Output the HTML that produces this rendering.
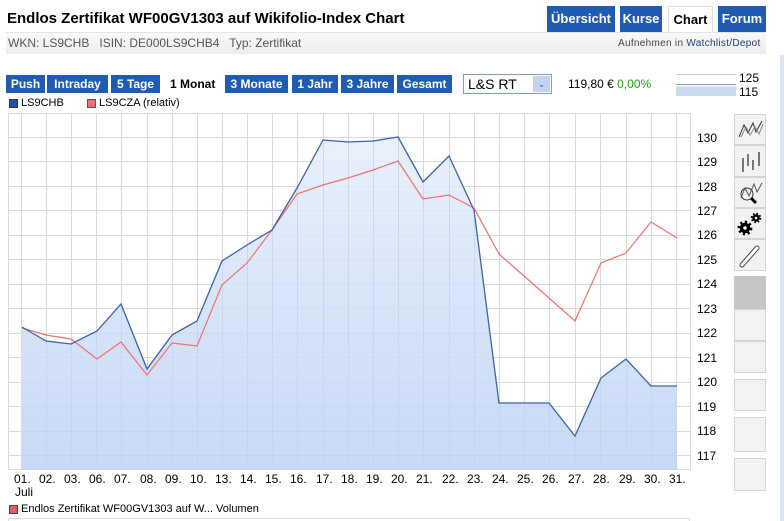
<!DOCTYPE html>
<html><head><meta charset="utf-8"><style>
*{margin:0;padding:0;box-sizing:border-box}
body{width:784px;height:521px;overflow:hidden;background:#fff;font-family:"Liberation Sans",sans-serif;position:relative;font-size:12px;color:#000}
.a{position:absolute}
.tab{position:absolute;top:6px;height:26px;background:#1f5bb0;color:#fff;font-weight:bold;font-size:13px;line-height:26px;text-align:center}
.btn{position:absolute;top:75px;height:18px;background:#1f5bb0;color:#fff;font-weight:bold;font-size:12px;line-height:18px;text-align:center}
.ib{position:absolute;left:734px;width:32px;background:#f2f2f2;border:1px solid #d4d4d4}
.yl{position:absolute;left:697px;font-size:12px}
.xl{position:absolute;top:472px;font-size:12px}
</style></head><body>
<div class="a" style="left:7px;top:10px;font-size:15px;font-weight:bold">Endlos Zertifikat WF00GV1303 auf Wikifolio-Index Chart</div>
<div class="tab" style="left:547px;width:68px">Übersicht</div>
<div class="tab" style="left:620px;width:42px">Kurse</div>
<div class="tab" style="left:668px;width:45px;background:#fff;color:#000;border:1px solid #ddd;border-bottom:none">Chart</div>
<div class="tab" style="left:718px;width:48px">Forum</div>
<div class="a" style="left:6px;top:32px;width:760px;height:22px;background:linear-gradient(#fafafa,#ececec);border-top:1px solid #e4e4e4"></div>
<div class="a" style="left:8px;top:36px;font-size:12px;color:#555">WKN: LS9CHB &nbsp; ISIN: DE000LS9CHB4 &nbsp; Typ: Zertifikat</div>
<div class="a" style="left:618px;top:38px;font-size:10px;color:#444;letter-spacing:0.3px">Aufnehmen in <span style="color:#1a3f80">Watchlist/Depot</span></div>
<div class="btn" style="left:6px;width:39px">Push</div>
<div class="btn" style="left:47px;width:61px">Intraday</div>
<div class="btn" style="left:111px;width:49px">5 Tage</div>
<div class="a" style="left:170px;top:77px;font-weight:bold;font-size:12px">1 Monat</div>
<div class="btn" style="left:225px;width:63px">3 Monate</div>
<div class="btn" style="left:292px;width:46px">1 Jahr</div>
<div class="btn" style="left:341px;width:53px">3 Jahre</div>
<div class="btn" style="left:397px;width:55px">Gesamt</div>
<div class="a" style="left:463px;top:74px;width:89px;height:20px;border:1px solid #7f9db9;font-size:14px;line-height:18px;padding-left:4px">L&amp;S RT</div>
<div class="a" style="left:533px;top:76px;width:17px;height:16px;background:#c4d4f0;color:#4d6185;font-size:9px;text-align:center;line-height:16px">&#8964;</div>
<div class="a" style="left:568px;top:77px;font-size:12px">119,80 € <span style="color:#1fa01f">0,00%</span></div>
<div class="a" style="left:676px;top:74px;width:60px;height:22px;border-top:1px solid #ccc;background:linear-gradient(#fff 55%,#cbd9f1 55%)"></div>
<div class="a" style="left:676px;top:84px;width:60px;height:1px;background:#8a9ab5"></div>
<div class="a" style="left:739px;top:71px;font-size:12px;line-height:14px">125<br>115</div>
<div class="a" style="left:780px;top:55px;width:4px;height:466px;background:#dde6f3"></div>
<div class="a" style="left:9px;top:99px;width:9px;height:9px;background:#1f4fae;border:1px solid #333"></div>
<div class="a" style="left:21px;top:97px;font-size:11px">LS9CHB</div>
<div class="a" style="left:87px;top:99px;width:9px;height:9px;background:#f27070;border:1px solid #555"></div>
<div class="a" style="left:99px;top:97px;font-size:11px">LS9CZA (relativ)</div>
<svg class="a" style="left:0;top:0" width="700" height="480">
<defs><linearGradient id="g" x1="0" y1="0" x2="0" y2="1"><stop offset="0" stop-color="#e6eefb"/><stop offset="1" stop-color="#bcd2f4"/></linearGradient></defs>
<g stroke="#dadada" stroke-width="1">
<path d="M8.5 113V470M690.5 113V470M8 113.5H690M8 469.5H690"/>
<path d="M21.5 113V470M46.5 113V470M71.5 113V470M96.5 113V470M121.5 113V470M147.5 113V470M172.5 113V470M197.5 113V470M222.5 113V470M247.5 113V470M272.5 113V470M297.5 113V470M323.5 113V470M348.5 113V470M373.5 113V470M398.5 113V470M423.5 113V470M449.5 113V470M474.5 113V470M499.5 113V470M524.5 113V470M549.5 113V470M575.5 113V470M600.5 113V470M626.5 113V470M651.5 113V470M676.5 113V470"/>
<path d="M8 137.5H690M8 161.5H690M8 186.5H690M8 210.5H690M8 235.5H690M8 259.5H690M8 284.5H690M8 308.5H690M8 333.5H690M8 357.5H690M8 382.5H690M8 406.5H690M8 431.5H690M8 455.5H690"/>
</g>
<path fill="url(#g)" fill-opacity="0.85" d="M22 327L46 341L71 344L97 331L121 304L147 369L172 335L197 321L222 261L247 245L272 230L297 188L323 140L348 142L373 141L398 137L423 182L449 156L474 210L499 403L524 403L549 403L575 436L601 378L626 359L651 386L677 386V470H22Z"/>
<g stroke="#c3d4ee" stroke-width="1" opacity="0.7"><path d="M46.5 341V470M71.5 344V470M96.5 331V470M121.5 304V470M147.5 369V470M172.5 335V470M197.5 321V470M222.5 261V470M247.5 245V470M272.5 230V470M297.5 188V470M323.5 140V470M348.5 142V470M373.5 141V470M398.5 137V470M423.5 182V470M449.5 156V470M474.5 210V470M499.5 403V470M524.5 403V470M549.5 403V470M575.5 436V470M600.5 378V470M626.5 359V470M651.5 386V470"/></g>
<polyline fill="none" stroke="#f07070" stroke-width="1.2" points="22,328 46,335 71,339 97,359 121,342 147,375 172,343 197,346 222,285 247,263 272,230 297,194 323,185 348,178 373,170 398,161 423,199 449,195 474,208 499,254 524,276 549,298 575,321 601,263 626,253 651,222 677,238"/>
<polyline fill="none" stroke="#3a63a8" stroke-width="1.3" points="22,327 46,341 71,344 97,331 121,304 147,369 172,335 197,321 222,261 247,245 272,230 297,188 323,140 348,142 373,141 398,137 423,182 449,156 474,210 499,403 524,403 549,403 575,436 601,378 626,359 651,386 677,386"/>
</svg>
<div class="yl" style="top:131px">130</div><div class="yl" style="top:155px">129</div><div class="yl" style="top:180px">128</div><div class="yl" style="top:204px">127</div><div class="yl" style="top:228px">126</div><div class="yl" style="top:253px">125</div><div class="yl" style="top:277px">124</div><div class="yl" style="top:302px">123</div><div class="yl" style="top:326px">122</div><div class="yl" style="top:351px">121</div><div class="yl" style="top:375px">120</div><div class="yl" style="top:400px">119</div><div class="yl" style="top:424px">118</div><div class="yl" style="top:449px">117</div>
<div class="xl" style="left:14px">01.</div><div class="xl" style="left:39px">02.</div><div class="xl" style="left:64px">03.</div><div class="xl" style="left:89px">06.</div><div class="xl" style="left:114px">07.</div><div class="xl" style="left:140px">08.</div><div class="xl" style="left:165px">09.</div><div class="xl" style="left:190px">10.</div><div class="xl" style="left:215px">13.</div><div class="xl" style="left:240px">14.</div><div class="xl" style="left:265px">15.</div><div class="xl" style="left:290px">16.</div><div class="xl" style="left:316px">17.</div><div class="xl" style="left:341px">18.</div><div class="xl" style="left:366px">19.</div><div class="xl" style="left:391px">20.</div><div class="xl" style="left:416px">21.</div><div class="xl" style="left:442px">22.</div><div class="xl" style="left:467px">23.</div><div class="xl" style="left:492px">24.</div><div class="xl" style="left:517px">25.</div><div class="xl" style="left:542px">26.</div><div class="xl" style="left:568px">27.</div><div class="xl" style="left:593px">28.</div><div class="xl" style="left:619px">29.</div><div class="xl" style="left:644px">30.</div><div class="xl" style="left:669px">31.</div>
<div class="a" style="left:15px;top:485px;font-size:12px">Juli</div>
<div class="a" style="left:9px;top:505px;width:9px;height:9px;background:#e06060;border:1px solid #444"></div>
<div class="a" style="left:21px;top:503px;font-size:11px">Endlos Zertifikat WF00GV1303 auf W... Volumen</div>
<div class="a" style="left:8px;top:518px;width:682px;height:3px;border:1px solid #ddd;border-bottom:none"></div>
<div class="ib" style="top:114px;height:31px"><svg width="30" height="29"><polyline points="4,22 9,10 13,18 18,8 21,17 27,6" fill="none" stroke="#333" stroke-width="1"/><polyline points="6,22 11,12 15,20 20,12 24,19 28,9" fill="none" stroke="#888" stroke-width="1"/></svg></div>
<div class="ib" style="top:145px;height:32px"><svg width="30" height="30"><path d="M8 12V26M13 8V20M18 14V24M24 6V20" stroke="#777" stroke-width="2"/></svg></div>
<div class="ib" style="top:177px;height:31px"><svg width="30" height="29"><circle cx="12" cy="16" r="6" fill="none" stroke="#333"/><path d="M16 20L21 25" stroke="#000" stroke-width="3"/><polyline points="6,20 10,10 14,18 19,6 22,14 27,5" fill="none" stroke="#555"/></svg></div>
<div class="ib" style="top:208px;height:31px"><svg width="30" height="29"><circle cx="10" cy="19" r="3.5" fill="#fff" stroke="#000" stroke-width="3.5"/><circle cx="10" cy="19" r="6.2" fill="none" stroke="#000" stroke-width="2.4" stroke-dasharray="2.2 2.6"/><circle cx="21" cy="9" r="2.5" fill="#fff" stroke="#000" stroke-width="2.5"/><circle cx="21" cy="9" r="4.4" fill="none" stroke="#000" stroke-width="1.8" stroke-dasharray="1.6 1.9"/></svg></div>
<div class="ib" style="top:239px;height:32px"><svg width="30" height="30"><path d="M7 25L22 8" stroke="#444" stroke-width="5" stroke-linecap="round"/><path d="M7 25L22 8" stroke="#fff" stroke-width="3" stroke-linecap="round"/></svg></div>
<div class="ib" style="top:276px;height:33px;background:#c6c6c6;border-color:#c6c6c6"></div>
<div class="ib" style="top:309px;height:32px"></div>
<div class="ib" style="top:341px;height:32px"></div>
<div class="ib" style="top:379px;height:32px"></div>
<div class="ib" style="top:417px;height:35px"></div>
<div class="ib" style="top:458px;height:33px"></div>
</body></html>
